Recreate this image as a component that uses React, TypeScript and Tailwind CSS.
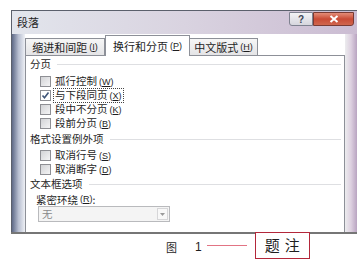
import React from 'react';

function Key({ k }: { k: string }) {
  return (
    <span className="text-[9px] ml-[2px] font-['Liberation_Sans',sans-serif]">
      (<span className="underline">{k}</span>)
    </span>
  );
}

function Check({ checked }: { checked?: boolean }) {
  return (
    <span
      className={
        'w-[11px] h-[11px] border border-[#8e8f94] flex items-center justify-center shrink-0 ' +
        (checked ? 'bg-white' : 'bg-gradient-to-br from-[#d2d3d6] to-[#f4f4f5]')
      }
    >
      {checked && (
        <svg width="9" height="9" viewBox="0 0 9 9">
          <path d="M1.5 4.5 L3.5 6.8 L7.5 1.5" fill="none" stroke="#3f5578" strokeWidth="1.6" />
        </svg>
      )}
    </span>
  );
}

function Row({ label, k, checked, focus }: { label: string; k: string; checked?: boolean; focus?: boolean }) {
  return (
    <div className="h-[14px] flex items-center gap-[2px] ml-[10px]">
      <Check checked={checked} />
      <span className={'leading-[12px] px-[1px] ' + (focus ? 'border border-dotted border-[#444]' : 'border border-transparent')}>
        {label}
        <Key k={k} />
      </span>
    </div>
  );
}

function Section({ title, className }: { title: string; className?: string }) {
  return (
    <div className={'h-[14px] flex items-center ' + (className ?? '')}>
      <span>{title}</span>
      <div className="flex-1 h-px bg-[#dedfe2] ml-[6px] mr-[3px]" />
    </div>
  );
}

export default function App() {
  return (
    <div className="w-[361px] h-[263px] bg-white overflow-hidden font-['Noto_Sans_CJK_SC',sans-serif] text-[10.5px] text-[#1e1e1e]">
      <div className="pt-[10px] pl-[11px]">
        {/* Window */}
        <div className="w-[346px] h-[222px] flex flex-col border-l border-t border-[#5b606c]">
          {/* Title bar */}
          <div className="h-[23px] flex items-start bg-gradient-to-r from-[#e2e5ec] via-[#d9d3e0] to-[#cbbcd2]">
            <span className="ml-[5px] mt-[5px] text-[11px] leading-[12px] text-[#222]">段落</span>
            <div className="flex-1" />
            <div className="mt-[1px] w-[24px] h-[14px] border border-[#7f8290] rounded-bl-[3px] bg-gradient-to-b from-[#f3f3f6] to-[#d6d6dd] flex items-center justify-center text-[10px] font-bold text-[#3d4354] font-['Liberation_Sans',sans-serif]">
              ?
            </div>
            <div className="mt-[1px] mr-[3px] w-[41px] h-[14px] border border-[#7a3a33] rounded-br-[3px] bg-gradient-to-b from-[#e38c78] via-[#c94a35] to-[#d0664d] flex items-center justify-center">
              <svg width="10" height="8" viewBox="0 0 10 8">
                <path d="M1.5 1 L8.5 7 M8.5 1 L1.5 7" stroke="#fff" strokeWidth="2" />
              </svg>
            </div>
          </div>

          {/* Body */}
          <div className="flex-1 flex">
            <div className="w-[13px] bg-gradient-to-r from-[#5f6a87] via-[#b7bed0] to-[#eef0f5]" />
            <div className="w-[320px] flex flex-col bg-white">
              {/* Tabs */}
              <div className="h-[21px] flex items-end">
                <div className="w-[80px] h-[17px] border border-b-0 border-[#8d9098] bg-gradient-to-b from-[#f6f6f6] to-[#e4e4e6] flex items-center justify-center text-[11px] leading-[12px]">
                  缩进和间距<Key k="I" />
                </div>
                <div className="w-[85px] h-[21px] -mb-px relative z-10 border border-b-0 border-[#8d9098] bg-white flex items-center justify-center text-[11px] leading-[12px]">
                  换行和分页<Key k="P" />
                </div>
                <div className="w-[68px] h-[17px] border border-b-0 border-l-0 border-[#8d9098] bg-gradient-to-b from-[#f6f6f6] to-[#e4e4e6] flex items-center justify-center text-[11px] leading-[12px]">
                  中文版式<Key k="H" />
                </div>
              </div>

              {/* Panel */}
              <div className="flex-1 border border-b-0 border-[#8d9098] pl-[4px] pt-[1px] flex flex-col">
                <Section title="分页" />
                <div className="mt-[3px]">
                  <Row label="孤行控制" k="W" />
                  <Row label="与下段同页" k="X" checked focus />
                  <Row label="段中不分页" k="K" />
                  <Row label="段前分页" k="B" />
                </div>
                <Section title="格式设置例外项" className="mt-[2px]" />
                <div className="mt-[2px]">
                  <Row label="取消行号" k="S" />
                  <Row label="取消断字" k="D" />
                </div>
                <Section title="文本框选项" className="mt-[1px]" />
                <div className="mt-[2px] ml-[6px] h-[13px] flex items-center">
                  紧密环绕<Key k="R" />:
                </div>
                <div className="ml-[8px] w-[132px] h-[16px] border border-[#b9babd] bg-[#f4f4f4] flex items-center">
                  <span className="ml-[3px] flex-1 text-[#8a8a8a]">无</span>
                  <div className="w-[11px] h-[12px] mr-[1px] border border-[#d6d6d8] bg-[#f8f8f8] flex items-center justify-center">
                    <svg width="5" height="3" viewBox="0 0 5 3">
                      <path d="M0 0 L5 0 L2.5 3 Z" fill="#9a9a9a" />
                    </svg>
                  </div>
                </div>
              </div>
            </div>
            <div className="flex-1 bg-gradient-to-r from-[#ececee] via-[#ddd0e0] to-[#b9a4c1]" />
          </div>
        </div>
        <div className="w-[346px] h-[2px] bg-[#767676]" />
      </div>

      {/* Caption */}
      <div className="-mt-[2px] h-[27px] flex items-center">
        <span className="ml-[166px] mt-[3px] text-[11px] leading-[12px]">图</span>
        <span className="ml-[18px] mt-[2px] text-[12px] leading-[12px] font-['Liberation_Sans',sans-serif]">1</span>
        <div className="ml-[5px] w-[40px] h-px bg-[#e27484]" />
        <div className="ml-[8px] w-[55px] h-[27px] relative z-10 border border-[#b3273a] bg-white flex items-center justify-center text-[15px] tracking-[5px] pl-[5px]">
          题注
        </div>
      </div>
    </div>
  );
}
